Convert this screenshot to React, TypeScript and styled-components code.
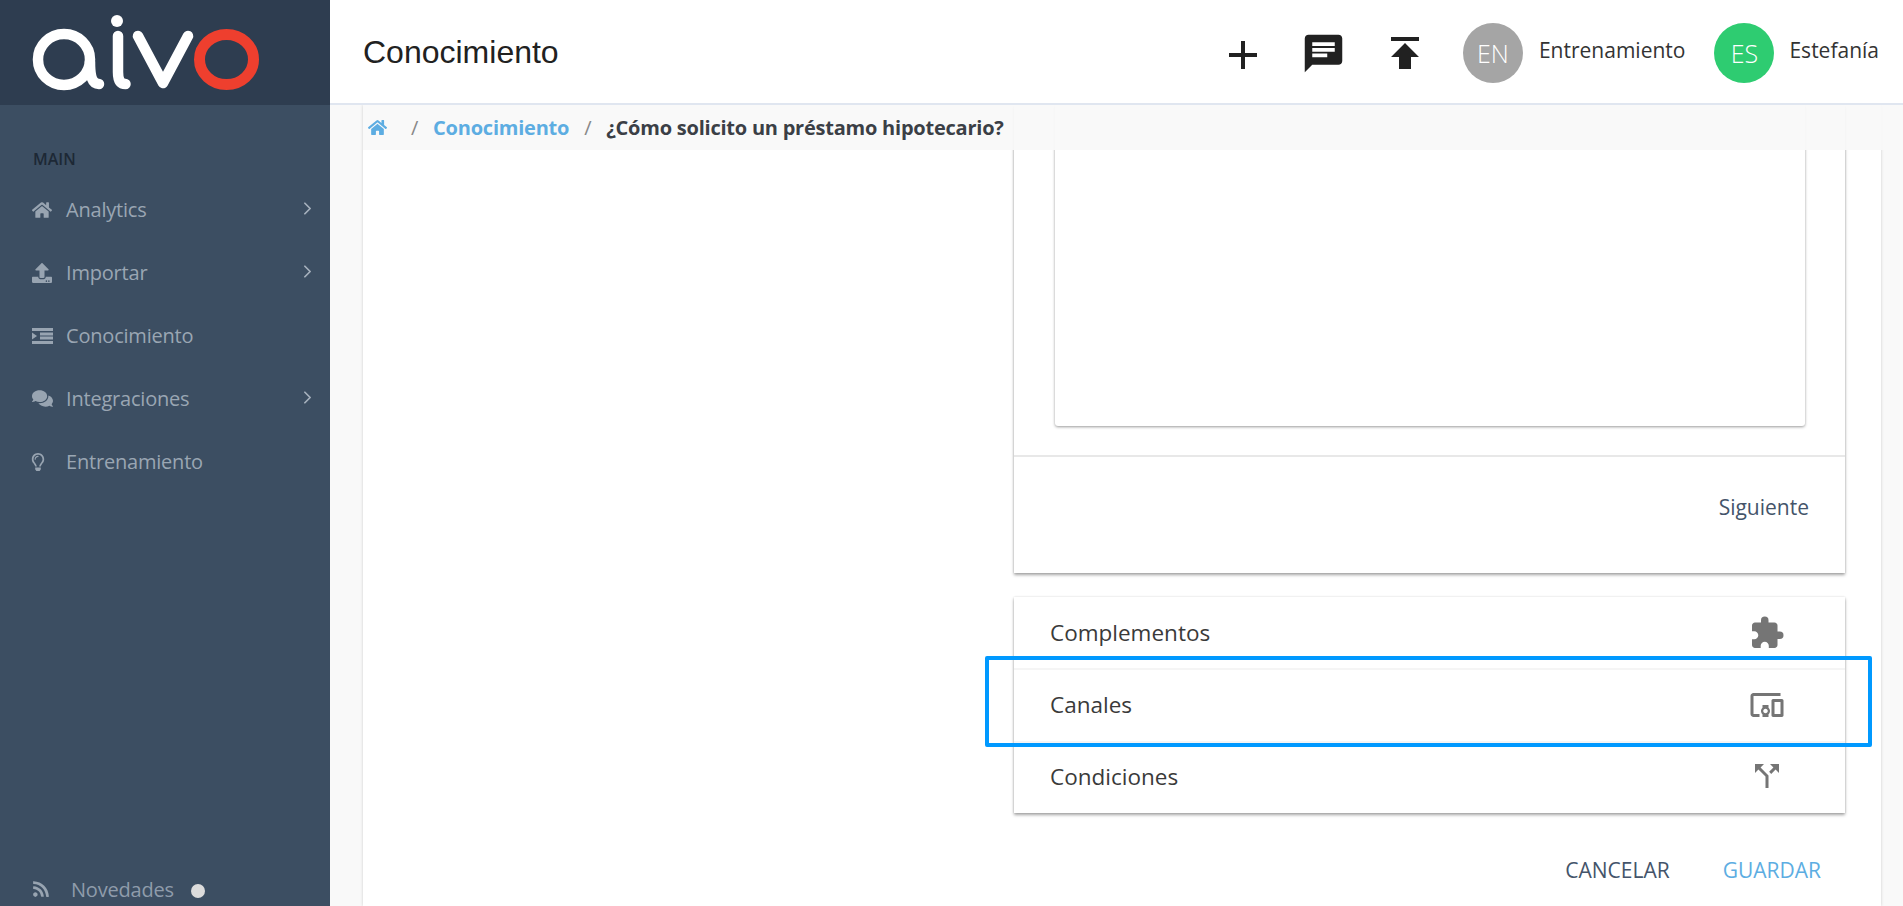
import React from "react";
import styled, { createGlobalStyle } from "styled-components";
import { FaHome, FaUpload, FaComments, FaRegLightbulb, FaRss } from "react-icons/fa";
import { MdAdd, MdChat, MdPublish, MdExtension, MdDevicesOther, MdCallSplit } from "react-icons/md";
import { ChevronRight } from "lucide-react";

const Global = createGlobalStyle`
  html, body { margin: 0; padding: 0; height: 100%; overflow: hidden; }
  body { font-family: "Open Sans", "Liberation Sans", sans-serif; background: #f9f9f9; }
  * { box-sizing: border-box; }
`;

const Shell = styled.div`
  display: grid;
  grid-template-columns: 330px 1fr;
  width: 1903px;
  height: 906px;
  overflow: hidden;
`;

const Sidebar = styled.aside`
  display: flex;
  flex-direction: column;
  background: #3c4e62;
  height: 906px;
`;

const LogoBar = styled.div`
  height: 105px;
  background: #2e3d50;
  flex: none;
`;

const SectionLabel = styled.div`
  margin: 44px 0 0 33px;
  font-size: 16px;
  line-height: 20px;
  font-weight: 600;
  color: #1d2835;
`;

const Nav = styled.nav`
  display: flex;
  flex-direction: column;
  margin-top: 9px;
`;

const NavItem = styled.div`
  display: flex;
  align-items: center;
  height: 63px;
  padding: 0 12px 0 32px;
  color: #9aa6b3;
  font-size: 20px;
  letter-spacing: -0.2px;
`;

const NavIcon = styled.span<{ $size?: number; $shift?: number }>`
  width: 34px;
  flex: none;
  display: flex;
  align-items: center;
  color: #98a4b1;
  font-size: ${(p) => p.$size ?? 20}px;
  svg {
    margin-left: ${(p) => p.$shift ?? 0}px;
  }
`;

const NavLabel = styled.span`
  flex: 1;
`;

const Chevron = styled(ChevronRight)`
  margin-top: -3px;
  color: #a6b1bd;
`;

const SideFooter = styled.div`
  margin-top: auto;
  margin-bottom: 1px;
  display: flex;
  align-items: center;
  height: 32px;
  padding-left: 32px;
  color: #8f9cab;
  font-size: 20px;
  letter-spacing: -0.2px;
`;

const FooterIcon = styled(FaRss)`
  font-size: 18px;
  margin-right: 21px;
  color: #98a4b1;
`;

const Dot = styled.span`
  width: 14px;
  height: 14px;
  border-radius: 50%;
  background: #dcdcdc;
  margin: 3px 0 0 17px;
`;

const MainColumn = styled.div`
  display: flex;
  flex-direction: column;
  min-width: 0;
  height: 906px;
`;

const Header = styled.header`
  display: flex;
  align-items: center;
  flex: none;
  height: 105px;
  background: #fff;
  border-bottom: 2px solid #e0e6f0;
  padding: 3px 24px 0 33px;
`;

const Title = styled.h1`
  flex: 1;
  margin: -2px 0 0;
  font-family: "Liberation Sans", Arial, sans-serif;
  font-size: 32px;
  font-weight: 400;
  color: #212121;
`;

const HeaderAction = styled.span<{ $w: number; $mr?: number; $dy?: number }>`
  display: flex;
  align-items: center;
  justify-content: center;
  width: ${(p) => p.$w}px;
  margin-top: ${(p) => p.$dy ?? 0}px;
  margin-right: ${(p) => p.$mr ?? 0}px;
  color: #212121;
`;

const Avatar = styled.span<{ $bg: string }>`
  display: flex;
  align-items: center;
  justify-content: center;
  width: 60px;
  height: 60px;
  border-radius: 50%;
  background: ${(p) => p.$bg};
  color: #fff;
  font-size: 25px;
  font-weight: 300;
  flex: none;
`;

const UserName = styled.span<{ $mr?: number; $ml: number }>`
  margin: -6px ${(p) => p.$mr ?? 0}px 0 ${(p) => p.$ml}px;
  font-size: 21px;
  font-weight: 400;
  color: #333;
`;

const Content = styled.main`
  position: relative;
  flex: 1;
  min-height: 0;
  overflow: hidden;
  padding: 0 22px 0 33px;
`;

const Crumbs = styled.div`
  position: absolute;
  top: 0;
  left: 33px;
  right: 0;
  height: 45px;
  display: flex;
  align-items: center;
  padding-left: 5px;
  background: rgba(249, 249, 249, 0.93);
  font-size: 20px;
  font-weight: 700;
  letter-spacing: -0.23px;
  z-index: 3;
`;

const CrumbHome = styled(FaHome)`
  font-size: 19px;
  color: #5dade2;
`;

const CrumbSep = styled.span<{ $l: number; $r: number }>`
  margin: 0 ${(p) => p.$r}px 0 ${(p) => p.$l}px;
  font-weight: 400;
  color: #888;
`;

const CrumbLink = styled.span`
  color: #5dade2;
`;

const CrumbCurrent = styled.span`
  color: #3b3f46;
`;

const Panel = styled.section`
  height: 100%;
  background: #fff;
  box-shadow: 0 0 3px rgba(0, 0, 0, 0.18);
  padding: 0 36px 0 651px;
  display: flex;
  flex-direction: column;
`;

const Card = styled.div`
  background: #fff;
  box-shadow: 0 2px 3px rgba(0, 0, 0, 0.35), 0 0 2px rgba(0, 0, 0, 0.12);
`;

const EditorBody = styled.div`
  padding: 0 40px 29px 41px;
`;

const EditorBox = styled.div`
  height: 321px;
  background: #fff;
  border-radius: 0 0 3px 3px;
  box-shadow: 0 1px 3px rgba(0, 0, 0, 0.4);
`;

const CardFooter = styled.div`
  height: 118px;
  border-top: 2px solid #e8e8e8;
  padding: 37px 36px 0 0;
  text-align: right;
  font-size: 21px;
  line-height: 26px;
  color: #44546a;
`;

const OptionsCard = styled(Card)`
  margin-top: 24px;
  display: flex;
  flex-direction: column;
`;

const OptionRow = styled.div<{ $h: number; $line?: boolean; $pb?: number }>`
  position: relative;
  display: flex;
  align-items: center;
  justify-content: space-between;
  height: ${(p) => p.$h}px;
  padding: 0 60px ${(p) => p.$pb ?? 0}px 36px;
  border-top: ${(p) => (p.$line ? "2px solid #f5f5f5" : "none")};
  font-size: 22.5px;
  color: #3a3a3a;
`;

const OptionIcon = styled.span`
  display: flex;
  width: 36px;
  justify-content: center;
  color: #757575;
  font-size: 38px;
`;

const Highlight = styled.div`
  position: absolute;
  top: -14px;
  left: -29px;
  width: 887px;
  height: 91px;
  border: 4px solid #0099ff;
  border-radius: 2px;
  pointer-events: none;
`;

const Actions = styled.div`
  display: flex;
  justify-content: flex-end;
  gap: 53px;
  padding: 44px 24px 0 0;
  font-size: 21px;
  line-height: 26px;
`;

const ActionButton = styled.span<{ $primary?: boolean }>`
  color: ${(p) => (p.$primary ? "#5dade2" : "#44546a")};
`;

const Logo = () => (
  <svg width="330" height="105" viewBox="0 0 330 105" fill="none" aria-label="aivo">
    <g stroke="#fff" strokeWidth="10.5" strokeLinecap="round" strokeLinejoin="round">
      <ellipse cx="64" cy="59.500" rx="26" ry="25.500" />
      <path d="M90 62c0 14 2 22 9 22" />
      <path d="M118 36v36c0 8 2 12 7.500 12" />
      <path d="M138 36l25 47 25-47" />
    </g>
    <circle cx="117" cy="21" r="6" fill="#fff" />
    <ellipse cx="226.500" cy="59.500" rx="27" ry="25" stroke="#ee3f2e" strokeWidth="11" />
  </svg>
);

const IndentGlyph = () => (
  <svg width="21" height="16" viewBox="0 0 21 16" fill="currentColor">
    <rect x="0" y="0" width="21" height="3" />
    <rect x="8" y="4.500" width="13" height="3" />
    <rect x="8" y="8.500" width="13" height="3" />
    <rect x="0" y="13" width="21" height="3" />
    <path d="M0 4.500l5 3.500-5 3.500z" />
  </svg>
);

const items = [
  { label: "Analytics", icon: <FaHome />, more: true },
  { label: "Importar", icon: <FaUpload />, more: true },
  { label: "Conocimiento", icon: <IndentGlyph />, more: false },
  { label: "Integraciones", icon: <FaComments />, more: true, size: 21 },
  { label: "Entrenamiento", icon: <FaRegLightbulb />, more: false, size: 18, shift: -3 },
];

const options = [
  { label: "Complementos", icon: <MdExtension />, h: 71, line: false, pb: 0 },
  { label: "Canales", icon: <MdDevicesOther />, h: 73, line: true, pb: 2, mark: true },
  { label: "Condiciones", icon: <MdCallSplit />, h: 72, line: true, pb: 4 },
];

export default function App() {
  return (
    <Shell>
      <Global />
      <Sidebar>
        <LogoBar>
          <Logo />
        </LogoBar>
        <SectionLabel>MAIN</SectionLabel>
        <Nav>
          {items.map((it) => (
            <NavItem key={it.label}>
              <NavIcon $size={it.size} $shift={it.shift}>{it.icon}</NavIcon>
              <NavLabel>{it.label}</NavLabel>
              {it.more && <Chevron size={21} strokeWidth={2} />}
            </NavItem>
          ))}
        </Nav>
        <SideFooter>
          <FooterIcon />
          Novedades
          <Dot />
        </SideFooter>
      </Sidebar>
      <MainColumn>
        <Header>
          <Title>Conocimiento</Title>
          <HeaderAction $w={80} $dy={3}>
            <MdAdd size={48} />
          </HeaderAction>
          <HeaderAction $w={82} $dy={1}>
            <MdChat size={45} />
          </HeaderAction>
          <HeaderAction $w={80} $mr={18}>
            <MdPublish size={48} />
          </HeaderAction>
          <Avatar $bg="#a5a5a5">EN</Avatar>
          <UserName $ml={16} $mr={29}>Entrenamiento</UserName>
          <Avatar $bg="#2ecc71">ES</Avatar>
          <UserName $ml={15}>Estefanía</UserName>
        </Header>
        <Content>
          <Crumbs>
            <CrumbHome />
            <CrumbSep $l={24} $r={15}>/</CrumbSep>
            <CrumbLink>Conocimiento</CrumbLink>
            <CrumbSep $l={15} $r={15}>/</CrumbSep>
            <CrumbCurrent>¿Cómo solicito un préstamo hipotecario?</CrumbCurrent>
          </Crumbs>
          <Panel>
            <Card>
              <EditorBody>
                <EditorBox />
              </EditorBody>
              <CardFooter>Siguiente</CardFooter>
            </Card>
            <OptionsCard>
              {options.map((o) => (
                <OptionRow key={o.label} $h={o.h} $line={o.line} $pb={o.pb}>
                  {o.label}
                  <OptionIcon>{o.icon}</OptionIcon>
                  {o.mark && <Highlight />}
                </OptionRow>
              ))}
            </OptionsCard>
            <Actions>
              <ActionButton>CANCELAR</ActionButton>
              <ActionButton $primary>GUARDAR</ActionButton>
            </Actions>
          </Panel>
        </Content>
      </MainColumn>
    </Shell>
  );
}
